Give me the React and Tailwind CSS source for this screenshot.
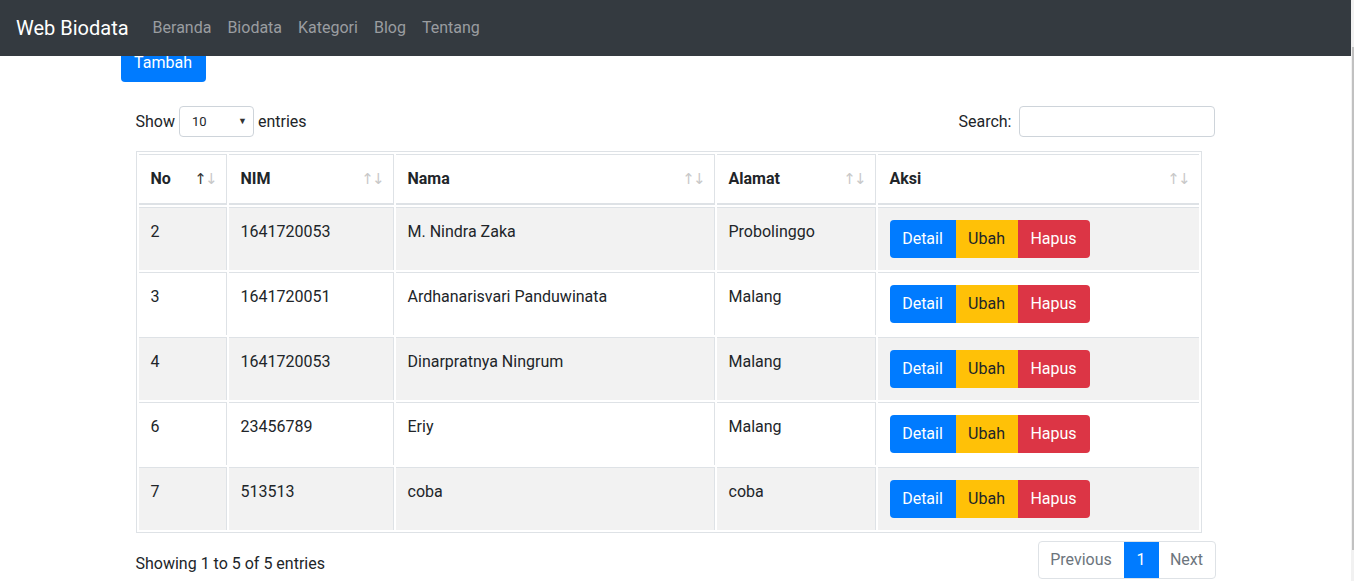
import React from 'react'

const rows = [
    { no: 2, nim: '1641720053', nama: 'M. Nindra Zaka', alamat: 'Probolinggo' },
    { no: 3, nim: '1641720051', nama: 'Ardhanarisvari Panduwinata', alamat: 'Malang' },
    { no: 4, nim: '1641720053', nama: 'Dinarpratnya Ningrum', alamat: 'Malang' },
    { no: 6, nim: '23456789', nama: 'Eriy', alamat: 'Malang' },
    { no: 7, nim: '513513', nama: 'coba', alamat: 'coba' },
]

const columns = [
    { label: 'No', width: 'w-[88px]', active: true },
    { label: 'NIM', width: 'w-[165px]' },
    { label: 'Nama', width: 'w-[319px]' },
    { label: 'Alamat', width: 'w-[159px]' },
    { label: 'Aksi', width: 'w-[321px]', last: true },
]

const SortArrows = ({ active }) => (
    <span className="flex items-center font-normal text-[15px] leading-none text-[#c8c8c8] font-['DejaVu_Sans',sans-serif]">
        <span className={active ? 'text-[#333]' : ''}>↑</span>
        <span className="-ml-[2px]">↓</span>
    </span>
)

const App = () => {
    return (
        <div className="flex h-[581px] overflow-hidden bg-white text-[#212529] font-['Roboto',sans-serif] text-base">
            <div className="flex-1 min-w-0 flex flex-col">
                <nav className="h-14 shrink-0 bg-[#343a40] flex items-center px-4">
                    <span className="text-xl text-white mr-4">Web Biodata</span>
                    {['Beranda', 'Biodata', 'Kategori', 'Blog', 'Tentang'].map(link => (
                        <span key={link} className="px-2 text-[#9a9da0]">
                            {link}
                        </span>
                    ))}
                </nav>

                <div className="w-[1140px] mx-auto px-[15px]">
                    {/* button is half scrolled under the navbar */}
                    <div className="h-[26px] overflow-hidden flex items-end">
                        <button className="shrink-0 w-[85px] h-[38px] bg-[#007bff] text-white rounded">
                            Tambah
                        </button>
                    </div>

                    <div className="px-[15px]">
                        <div className="mt-[24px] flex items-center justify-between h-[31px]">
                            <div className="flex items-center">
                                <span>Show</span>
                                <div className="ml-1 mr-[4px] w-[75px] h-[31px] border border-[#ced4da] rounded flex items-center justify-between pl-3 pr-[6px] text-[13px]">
                                    <span>10</span>
                                    <span className="text-[9px] text-[#333]">▼</span>
                                </div>
                                <span>entries</span>
                            </div>
                            <div className="flex items-center">
                                <span>Search:</span>
                                <div className="ml-[7px] mr-[1px] w-[196px] h-[31px] border border-[#ced4da] rounded" />
                            </div>
                        </div>

                        <table className="mt-[14px] w-[1066px] table-fixed border-separate border-spacing-[2px] border border-[#dee2e6]">
                            <thead>
                                <tr>
                                    {columns.map(col => (
                                        <th
                                            key={col.label}
                                            className={`${col.width} border-t border-b-2 border-[#dee2e6] ${col.last ? '' : 'border-r'} pl-3 pr-[8px] py-3 text-left font-bold`}
                                        >
                                            <div className="flex items-center justify-between h-6">
                                                <span>{col.label}</span>
                                                <SortArrows active={col.active} />
                                            </div>
                                        </th>
                                    ))}
                                </tr>
                            </thead>
                            <tbody>
                                {rows.map((row, i) => {
                                    const bg = i % 2 === 0 ? 'bg-[#f2f2f2]' : 'bg-white'
                                    const cell = `${bg} border-t border-r border-[#dee2e6] p-3 align-top`
                                    return (
                                        <tr key={row.no}>
                                            <td className={cell}>{row.no}</td>
                                            <td className={cell}>{row.nim}</td>
                                            <td className={cell}>{row.nama}</td>
                                            <td className={cell}>{row.alamat}</td>
                                            <td className={`${bg} border-t border-[#dee2e6] p-3 align-top`}>
                                                <div className="flex">
                                                    <button className="w-[66px] h-[38px] bg-[#007bff] text-white rounded-l">
                                                        Detail
                                                    </button>
                                                    <button className="w-[62px] h-[38px] bg-[#ffc107] text-[#212529]">
                                                        Ubah
                                                    </button>
                                                    <button className="w-[72px] h-[38px] bg-[#dc3545] text-white rounded-r">
                                                        Hapus
                                                    </button>
                                                </div>
                                            </td>
                                        </tr>
                                    )
                                })}
                            </tbody>
                        </table>

                        <div className="mt-2 flex items-start justify-between">
                            <span className="pt-[11px]">Showing 1 to 5 of 5 entries</span>
                            <div className="flex h-[38px] rounded border border-[#dee2e6] overflow-hidden">
                                <span className="w-[85px] flex items-center justify-center text-[#6c757d]">Previous</span>
                                <span className="w-[35px] flex items-center justify-center bg-[#007bff] text-white">1</span>
                                <span className="w-[56px] flex items-center justify-center text-[#6c757d]">Next</span>
                            </div>
                        </div>
                    </div>
                </div>
            </div>

            <div className="w-[3px] shrink-0 bg-[#f1f1f1] flex flex-col pt-[47px] pb-[31px]">
                <div className="flex-1 w-[2px] ml-[1px] bg-[#c1c1c1]" />
            </div>
        </div>
    )
}

export default App
